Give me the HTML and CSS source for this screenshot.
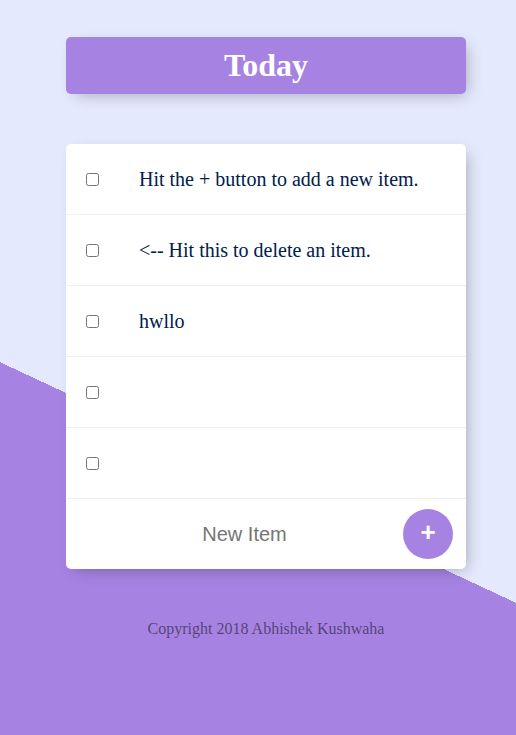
FILE: index.html
```html
<!DOCTYPE html>
<html lang="en">
<head>
<meta charset="utf-8">
<title>To Do List</title>
<link rel="stylesheet" href="styles.css">
</head>
<body>
  <div class="page">
    <div class="box heading">
      <h1 class="title">Today</h1>
    </div>
    <div class="box list">
      <div class="item">
        <input type="checkbox" class="check">
        <p class="text">Hit the + button to add a new item.</p>
      </div>
      <div class="item">
        <input type="checkbox" class="check">
        <p class="text">&lt;-- Hit this to delete an item.</p>
      </div>
      <div class="item">
        <input type="checkbox" class="check">
        <p class="text">hwllo</p>
      </div>
      <div class="item">
        <input type="checkbox" class="check">
        <p class="text"></p>
      </div>
      <div class="item">
        <input type="checkbox" class="check">
        <p class="text"></p>
      </div>
      <form class="item form-row">
        <input type="text" class="new-item" placeholder="New Item" autocomplete="off">
        <button type="button" class="add-btn">+</button>
      </form>
    </div>
    <footer class="footer">Copyright 2018 Abhishek Kushwaha</footer>
  </div>
</body>
</html>
```
FILE: styles.css
```css
html {
  background-color: #E4E9FD;
  background-image: linear-gradient(25deg, #A683E3 50%, #E4E9FD 50%);
  background-repeat: no-repeat;
  background-size: 100% 965px;
  min-height: 100%;
}

body {
  margin: 0;
  padding: 37px 0 0 16px;
  font-family: "Liberation Serif", "Times New Roman", serif;
}

.page {
  display: flex;
  flex-direction: column;
  align-items: center;
}

.box {
  width: 400px;
  background: #fff;
  border-radius: 5px;
  box-shadow: 5px 5px 15px -5px rgba(0, 0, 0, 0.3);
}

.heading {
  background: #A683E3;
  text-align: center;
}

.title {
  margin: 0;
  padding: 10px;
  color: #fff;
  font-size: 32px;
  font-weight: bold;
  line-height: 37px;
}

.list {
  margin-top: 50px;
}

.item {
  min-height: 70px;
  display: flex;
  align-items: center;
  border-bottom: 1px solid #F1F1F1;
}

.item:last-child {
  border-bottom: none;
}

.check {
  margin: 20px;
  width: 13px;
  height: 13px;
}

.text {
  margin: 0;
  padding: 20px;
  font-size: 20px;
  color: #00204a;
  line-height: 23px;
}

.form-row {
  margin: 0 0 0 20px;
}

.new-item {
  box-sizing: content-box;
  width: 313px;
  height: 60px;
  padding: 1px 2px;
  margin: 0;
  border: none;
  outline: none;
  text-align: center;
  font-family: "Liberation Sans", Arial, sans-serif;
  font-size: 20px;
  color: #333;
  background: transparent;
}

.new-item::placeholder {
  color: #757575;
}

.add-btn {
  width: 50px;
  height: 50px;
  margin: 0;
  padding: 0 0 4px 0;
  border: none;
  border-radius: 50%;
  background-color: #A683E3;
  color: #fff;
  font-family: "Liberation Sans", Arial, sans-serif;
  font-size: 26px;
  font-weight: bold;
  line-height: 44px;
  cursor: pointer;
}

.footer {
  margin-top: 51px;
  color: rgba(0, 0, 0, 0.5);
  font-size: 16px;
  text-align: center;
}
```
